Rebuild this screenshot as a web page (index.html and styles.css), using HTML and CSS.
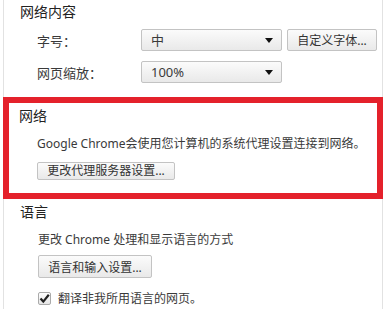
FILE: index.html
```html
<!DOCTYPE html>
<html lang="zh-CN">
<head>
    <meta charset="UTF-8">
    <title>设置</title>
    <link rel="stylesheet" href="styles.css">
</head>
<body>
    <div class="page">
        <section class="section">
            <h3 class="section-title">网络内容</h3>
            <div class="field-row">
                <span class="field-label">字号：</span>
                <div class="select">中<span class="arrow"></span></div>
                <button class="btn">自定义字体...</button>
            </div>
            <div class="field-row">
                <span class="field-label">网页缩放：</span>
                <div class="select">100%<span class="arrow"></span></div>
            </div>
        </section>

        <!-- highlighted network block -->
        <section class="section highlight">
            <h3 class="section-title">网络</h3>
            <div class="indent">
                <p class="desc">Google Chrome会使用您计算机的系统代理设置连接到网络。</p>
                <button class="btn proxy-btn">更改代理服务器设置...</button>
            </div>
        </section>

        <section class="section lang">
            <h3 class="section-title">语言</h3>
            <div class="indent">
                <p class="desc">更改 Chrome 处理和显示语言的方式</p>
                <button class="btn lang-btn">语言和输入设置...</button>
                <label class="check">
                    <span class="check-box">
                        <svg width="11" height="11" viewBox="0 0 11 11"><path d="M1.5 5.5 L4.3 8.6 L9.8 1.8" fill="none" stroke="#222" stroke-width="2.2"/></svg>
                    </span>
                    翻译非我所用语言的网页。
                </label>
            </div>
        </section>
    </div>
</body>
</html>
```

FILE: styles.css
```css
body {
    margin: 0;
    padding: 0 3px;
    background-color: #fff;
    font-family: 'Noto Sans', 'Noto Sans CJK SC', sans-serif;
    font-size: 12px;
    color: #3a3a3a;
}
.page {
    border-left: 1px solid #e2e2e2;
    border-right: 1px solid #e2e2e2;
    height: 309px;
    box-sizing: border-box;
}
.section {
    padding-left: 16px;
}
.section-title {
    margin: 0;
    padding-top: 2px;
    font-size: 14px;
    font-weight: normal;
    line-height: 20px;
    color: #222;
}
.field-row {
    display: flex;
    align-items: center;
    margin-left: 17px;
    margin-top: 7px;
}
.field-row + .field-row {
    margin-top: 10px;
}
.field-label {
    width: 104px;
    font-size: 13px;
}
.select {
    position: relative;
    width: 141px;
    height: 22px;
    line-height: 21px;
    padding-left: 9px;
    box-sizing: border-box;
    border: 1px solid #c3c3c3;
    border-radius: 2px;
    background: linear-gradient(#fbfbfb, #e9e9e9);
    font-size: 13px;
}
.arrow {
    position: absolute;
    right: 8px;
    top: 8px;
    border-left: 4px solid transparent;
    border-right: 4px solid transparent;
    border-top: 5px solid #111;
}
.btn {
    display: block;
    height: 22px;
    padding: 0 9px;
    border: 1px solid #c3c3c3;
    border-radius: 2px;
    background: linear-gradient(#fbfbfb, #e9e9e9);
    font-family: inherit;
    font-size: 12px;
    color: #333;
}
.field-row .btn {
    margin-left: 5px;
    width: 90px;
}
.highlight {
    margin-top: 14px;
    margin-left: -1px;
    margin-right: -1px;
    border: 6px solid #e4212b;
    padding-left: 10px;
    padding-bottom: 13px;
}
.highlight .section-title {
    padding-top: 3px;
}
.indent {
    padding-left: 18px;
}
.desc {
    margin: 0;
    line-height: 16px;
}
.highlight .desc {
    margin: 10px 0 10px;
}
.proxy-btn {
    width: 138px;
    height: 18px;
    line-height: 14px;
}
.lang .section-title {
    padding-top: 3px;
}
.lang .desc {
    margin: 10px 0 7px;
}
.lang-btn {
    width: 114px;
    height: 23px;
}
.check {
    display: flex;
    align-items: center;
    margin-top: 14px;
    gap: 7px;
    line-height: 13px;
}
.check-box {
    display: flex;
    align-items: center;
    justify-content: center;
    width: 13px;
    height: 13px;
    box-sizing: border-box;
    border: 1px solid #aaa;
    border-radius: 2px;
    background: linear-gradient(#fff, #e6e6e6);
}
```
